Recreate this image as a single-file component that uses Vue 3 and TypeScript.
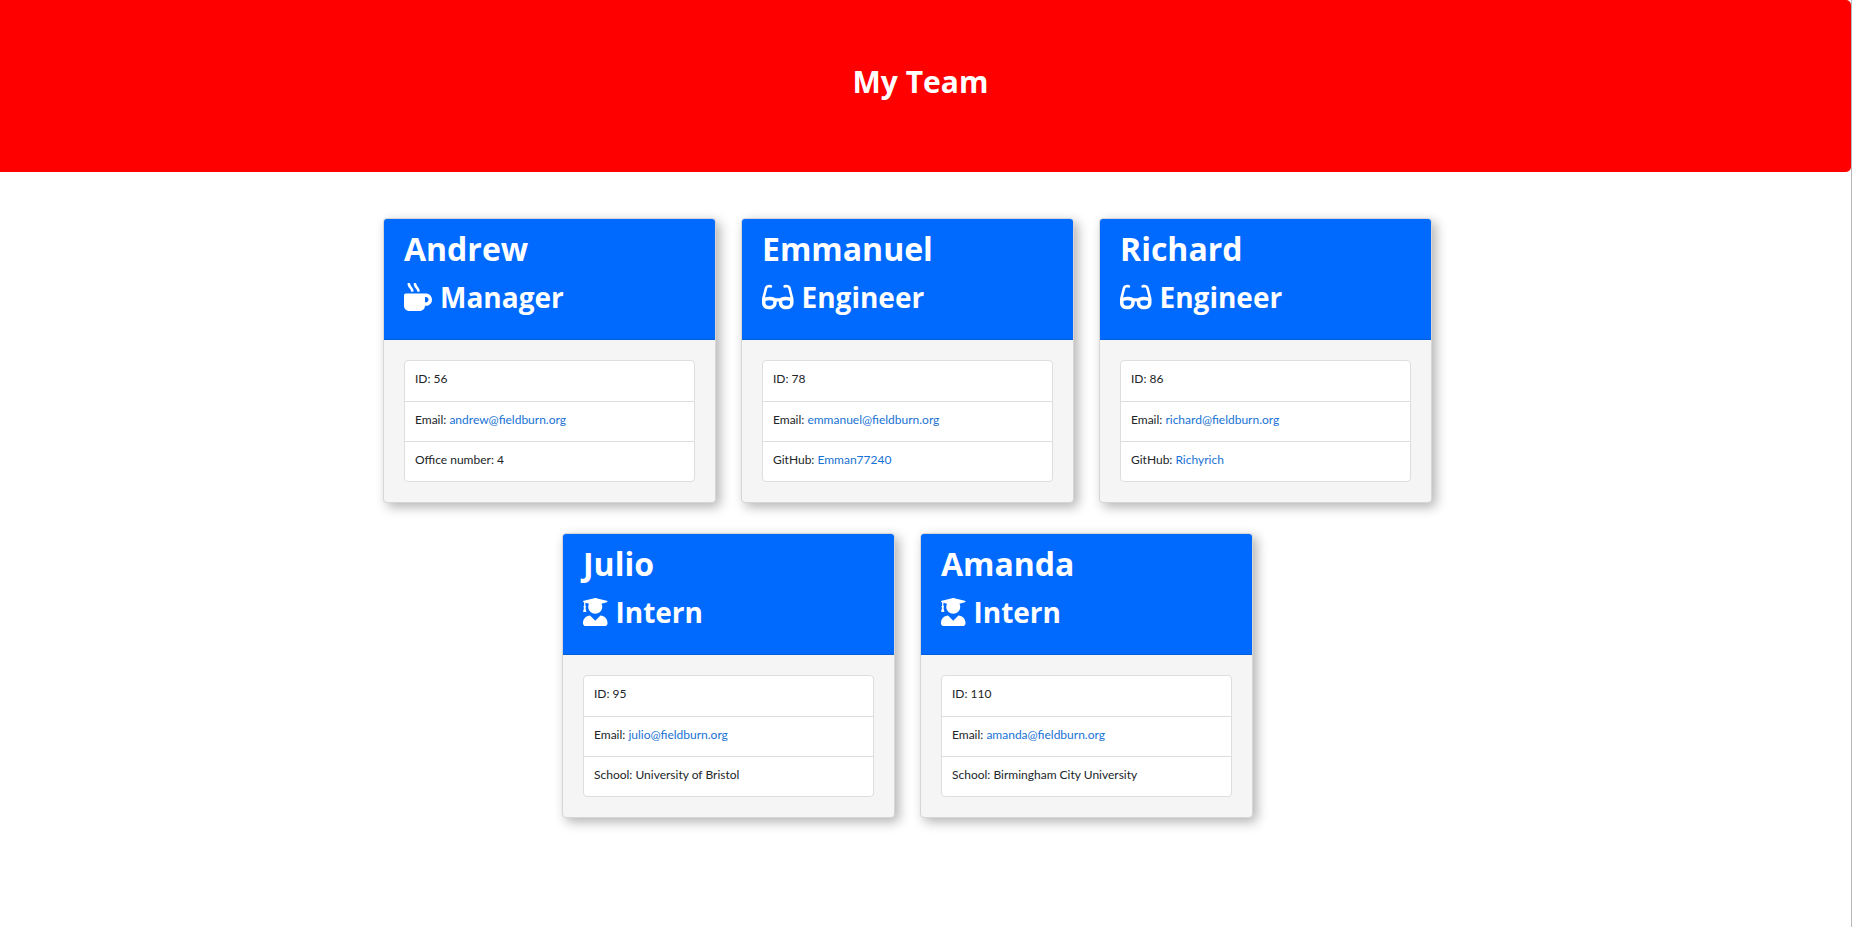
<script setup lang="ts">
type Role = 'Manager' | 'Engineer' | 'Intern'

interface Detail {
  label: string
  value: string
  href?: string
}

interface Member {
  name: string
  role: Role
  details: Detail[]
}

interface Icon {
  width: number
  path: string
}

const icons: Record<Role, Icon> = {
  Manager: {
    width: 512,
    path: 'M127.1 146.5c1.3 7.7 8 13.5 16 13.5h16.5c9.8 0 17.6-8.5 16.3-18-3.8-28.2-16.4-54.2-36.6-74.7-14.4-14.7-23.6-33.3-26.4-53.5C111.8 5.9 105 0 96.8 0H80.4C70.6 0 63 8.5 64.1 18c3.9 31.9 18 61.3 40.6 84.4 12 12.2 19.7 27.5 22.4 44.1zm112 0c1.3 7.7 8 13.5 16 13.5h16.5c9.8 0 17.6-8.5 16.3-18-3.8-28.2-16.4-54.2-36.6-74.7-14.4-14.7-23.6-33.3-26.4-53.5C223.8 5.9 217 0 208.8 0h-16.4c-9.8 0-17.5 8.5-16.3 18 3.9 31.9 18 61.3 40.6 84.4 12 12.2 19.7 27.5 22.4 44.1zM400 192H32c-17.7 0-32 14.3-32 32v192c0 53 43 96 96 96h192c53 0 96-43 96-96h16c61.8 0 112-50.2 112-112s-50.2-112-112-112zm0 160h-16v-96h16c26.5 0 48 21.5 48 48s-21.5 48-48 48z',
  },
  Engineer: {
    width: 576,
    path: 'M574.1 280.37L528.75 98.66c-5.91-23.7-21.59-44.05-43-55.81-21.44-11.73-46.97-14.11-70.19-6.33l-15.25 5.08c-8.39 2.79-12.92 11.86-10.12 20.24l5.06 15.18c2.79 8.38 11.85 12.91 20.23 10.12l13.18-4.39c10.87-3.62 23-3.57 33.16 1.73 10.29 5.37 17.57 14.56 20.37 25.82l38.46 153.82c-22.19-6.81-49.79-12.46-81.2-12.46-34.77 0-73.98 7.02-114.85 26.74h-73.18c-40.87-19.74-80.08-26.75-114.86-26.75-31.42 0-59.02 5.65-81.21 12.46l38.46-153.83c2.79-11.25 10.09-20.45 20.38-25.81 10.16-5.3 22.28-5.35 33.15-1.73l13.17 4.39c8.38 2.79 17.44-1.74 20.23-10.12l5.06-15.18c2.8-8.38-1.73-17.45-10.12-20.24l-15.25-5.08c-23.22-7.78-48.75-5.41-70.19 6.33-21.41 11.77-37.09 32.11-43 55.8L1.9 280.37A64.218 64.218 0 0 0 0 295.86v70.25C0 429.01 51.58 480 115.2 480h37.12c60.28 0 110.37-45.94 114.88-105.37l2.93-38.63h35.75l2.93 38.63C313.31 434.06 363.4 480 423.68 480h37.12c63.62 0 115.2-50.99 115.2-113.88v-70.25c0-5.23-.64-10.43-1.9-15.5zm-370.72 89.42c-1.97 25.91-24.4 46.21-51.06 46.21H115.2C86.97 416 64 393.62 64 366.11v-37.54c18.12-6.49 43.42-12.92 72.58-12.92 23.86 0 47.26 4.33 69.93 12.92l-3.13 41.22zM512 366.12c0 27.51-22.97 49.88-51.2 49.88h-37.12c-26.67 0-49.1-20.3-51.06-46.21l-3.13-41.22c22.67-8.59 46.08-12.92 69.95-12.92 29.12 0 54.43 6.44 72.55 12.93v37.54z',
  },
  Intern: {
    width: 448,
    path: 'M319.4 320.6L224 416l-95.4-95.4C57.1 323.7 0 382.2 0 454.4v9.6c0 26.5 21.5 48 48 48h352c26.5 0 48-21.5 48-48v-9.6c0-72.2-57.1-130.7-128.6-133.8zM13.6 79.8l6.4 1.5v58.4c-7 4.2-12 11.5-12 20.3 0 8.4 4.6 15.4 11.1 19.7L3.5 242c-1.7 6.9 2.1 14 7.6 14h41.8c5.5 0 9.3-7.1 7.6-14l-15.6-62.3C51.4 175.4 56 168.4 56 160c0-8.8-5-16.1-12-20.3V87.1l66 15.9c-8.6 17.2-14 36.4-14 57 0 70.7 57.3 128 128 128s128-57.3 128-128c0-20.6-5.3-39.8-14-57l96.3-23.2c18.2-4.4 18.2-27.1 0-31.5l-190.4-46c-13-3.1-26.7-3.1-39.7 0L13.6 48.2c-18.1 4.4-18.1 27.2 0 31.6z',
  },
}

const email = (address: string): Detail => ({ label: 'Email', value: address, href: `mailto:${address}` })
const github = (user: string): Detail => ({ label: 'GitHub', value: user, href: `https://github.com/${user}` })

const team: Member[] = [
  {
    name: 'Andrew',
    role: 'Manager',
    details: [{ label: 'ID', value: '56' }, email('andrew@fieldburn.org'), { label: 'Office number', value: '4' }],
  },
  {
    name: 'Emmanuel',
    role: 'Engineer',
    details: [{ label: 'ID', value: '78' }, email('emmanuel@fieldburn.org'), github('Emman77240')],
  },
  {
    name: 'Richard',
    role: 'Engineer',
    details: [{ label: 'ID', value: '86' }, email('richard@fieldburn.org'), github('Richyrich')],
  },
  {
    name: 'Julio',
    role: 'Intern',
    details: [{ label: 'ID', value: '95' }, email('julio@fieldburn.org'), { label: 'School', value: 'University of Bristol' }],
  },
  {
    name: 'Amanda',
    role: 'Intern',
    details: [{ label: 'ID', value: '110' }, email('amanda@fieldburn.org'), { label: 'School', value: 'Birmingham City University' }],
  },
]
</script>

<template>
  <div class="page">
    <header class="banner">
      <h1>My Team</h1>
    </header>
    <main class="team">
      <article v-for="member in team" :key="member.name" class="card">
        <div class="card-header">
          <h2>{{ member.name }}</h2>
          <h3>
            <svg
              :viewBox="`0 0 ${icons[member.role].width} 512`"
              aria-hidden="true"
            >
              <path :d="icons[member.role].path" />
            </svg>
            <span>{{ member.role }}</span>
          </h3>
        </div>
        <div class="card-body">
          <ul>
            <li v-for="detail in member.details" :key="detail.label">
              {{ detail.label }}: <a v-if="detail.href" :href="detail.href">{{ detail.value }}</a>
              <template v-else>{{ detail.value }}</template>
            </li>
          </ul>
        </div>
      </article>
    </main>
  </div>
</template>

<style>
body {
  margin: 0;
  background: #ffffff;
}
</style>

<style scoped>
.page {
  box-sizing: border-box;
  min-height: 100vh;
  margin-right: 1px;
  border-right: 1px solid #b8b8b8;
  font-family: "Open Sans", "Noto Sans", sans-serif;
  color: #212529;
}

h1,
h2,
h3,
ul {
  margin: 0;
}

.banner {
  padding: 64px 10px 72px 0;
  background: #ff0000;
  border-radius: 0 5px 5px 0;
  color: #ffffff;
  text-align: center;
}

.banner h1 {
  font-size: 30px;
  line-height: 36px;
  font-weight: 700;
}

.team {
  display: flex;
  flex-wrap: wrap;
  justify-content: center;
  gap: 30px 25px;
  padding: 46px 36px 46px 0;
  max-width: 1110px;
  margin: 0 auto;
}

.card {
  box-sizing: border-box;
  width: 333px;
  border: 1px solid #d6d6d6;
  border-radius: 4px;
  background: #f5f5f5;
  box-shadow: 4px 4px 12px rgba(0, 0, 0, 0.3);
}

.card-header {
  padding: 11px 20px 22px;
  border-bottom: 1px solid #0560d8;
  border-radius: 3px 3px 0 0;
  background: #006aff;
  color: #ffffff;
}

.card-header h2 {
  margin-bottom: 9px;
  font-size: 32px;
  line-height: 38px;
  font-weight: 700;
}

.card-header h3 {
  display: flex;
  align-items: center;
  gap: 8px;
  font-size: 28px;
  line-height: 40px;
  font-weight: 700;
}

.card-header svg {
  height: 28px;
  fill: currentColor;
}

.card-body {
  padding: 20px;
}

.card-body ul {
  display: grid;
  grid-auto-rows: 1fr;
  box-sizing: border-box;
  min-height: 122px;
  padding: 0;
  border: 1px solid #dedede;
  border-radius: 4px;
  background: #ffffff;
  list-style: none;
}

.card-body li {
  padding: 8px 10px 11px;
  font-family: Lato, "Open Sans", sans-serif;
  font-size: 12px;
  line-height: 20px;
}

.card-body li + li {
  border-top: 1px solid #dedede;
}

.card-body a {
  color: #1872d4;
  text-decoration: none;
}
</style>
